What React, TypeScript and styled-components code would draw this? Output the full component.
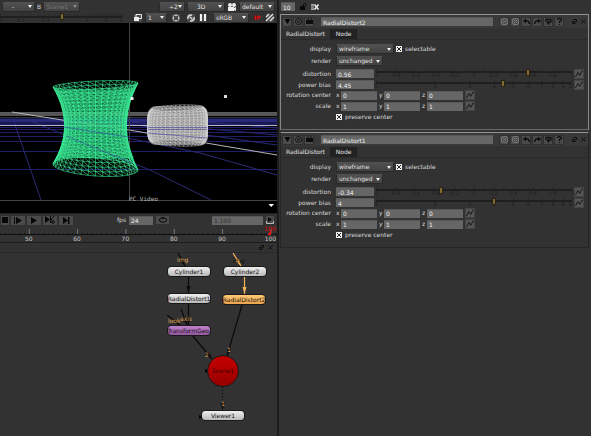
import React from "react";
import styled, { createGlobalStyle } from "styled-components";

const Global = createGlobalStyle`
  * { box-sizing: border-box; }
  body { margin: 0; background: #323232; }
  body, button, input, select {
    font-family: "DejaVu Sans", "Liberation Sans", sans-serif;
    font-size: 6px;
    line-height: 8px;
    color: #dadada;
  }
  button, input, select { margin: 0; padding: 0; border: 0; border-radius: 0; outline: 0; }
`;

/* ---------- layout ---------- */

const Page = styled.div`
  display: grid;
  grid-template-columns: minmax(0, 279fr) minmax(0, 312fr);
  min-height: 100vh;
  background: #323232;
`;

const LeftPane = styled.main`
  display: flex;
  flex-direction: column;
  min-width: 0;
  border-right: 2px solid #1c1c1c;
`;

const RightPane = styled.aside`
  display: flex;
  flex-direction: column;
  min-width: 0;
  padding: 2px 2px 0 1px;
`;

/* ---------- shared controls ---------- */

const Spacer = styled.div`
  flex: 1;
`;

const SelectBox = styled.span<{ $w: number; $dim?: boolean; $center?: boolean }>`
  display: grid;
  grid-template-columns: 1fr 8px;
  align-items: center;
  width: ${(p) => p.$w}px;
  height: 10px;
  flex: none;
  background: linear-gradient(#505050, #424242);
  border: 1px solid #2a2a2a;
  border-top-color: #505050;

  select {
    grid-area: 1 / 1 / 2 / 3;
    width: 100%;
    height: 8px;
    padding-left: ${(p) => (p.$center ? 9 : 2)}px;
    appearance: none;
    background: transparent;
    color: ${(p) => (p.$dim ? "#777" : "#e2e2e2")};
  }
  svg {
    grid-area: 1 / 2;
    width: 4px;
    height: 3px;
    justify-self: center;
    pointer-events: none;
    fill: ${(p) => (p.$dim ? "#888" : "#eee")};
  }
`;

type PickProps = { label: string; value: string; w: number; dim?: boolean; center?: boolean; id?: string };

function Pick({ label, value, w, dim, center, id }: PickProps) {
  return (
    <SelectBox $w={w} $dim={dim} $center={center}>
      <select id={id} aria-label={id ? undefined : label} defaultValue={value}>
        <option value={value}>{value}</option>
      </select>
      <svg viewBox="0 0 4 3"><path d="M0 0H4L2 3Z" /></svg>
    </SelectBox>
  );
}

const IconButton = styled.button<{ $w?: number; $flat?: boolean }>`
  display: flex;
  align-items: center;
  justify-content: center;
  flex: none;
  width: ${(p) => p.$w ?? 10}px;
  height: 10px;
  background: ${(p) => (p.$flat ? "transparent" : "#4a4a4a")};
  border: 1px solid ${(p) => (p.$flat ? "transparent" : "#303030")};
  color: #dedede;

  svg { display: block; flex: none; overflow: visible; }
`;

const CurveFrame = styled(IconButton)`
  background: #555;
  border-color: #444;
`;

const Field = styled.input<{ $w: number; $dim?: boolean }>`
  width: ${(p) => p.$w}px;
  height: 9px;
  flex: none;
  padding-left: 2px;
  background: #666;
  border-top: 1px solid #585858;
  color: ${(p) => (p.$dim ? "#303030" : "#f2f2f2")};
`;

const Check = styled.input`
  appearance: none;
  width: 6px;
  height: 6px;
  flex: none;
  background:
    linear-gradient(45deg, transparent 42%, #222 42% 58%, transparent 58%),
    linear-gradient(-45deg, #eee 42%, #222 42% 58%, #eee 58%);
  border: 1px solid #eee;
`;

/* ---------- slider with scale ---------- */

const SliderBox = styled.div`
  display: grid;
  flex: 1;
  min-width: 0;
  height: 11px;

  svg {
    grid-area: 1 / 1;
    width: 100%;
    height: 11px;
    overflow: visible;
  }
  input {
    grid-area: 1 / 1;
    width: 100%;
    height: 8px;
    appearance: none;
    background: transparent;
  }
  input::-webkit-slider-thumb {
    appearance: none;
    width: 2px;
    height: 5px;
    background: #80692f;
    outline: 1px solid #2a2415;
  }
`;

type Mark = { at: number; text: string };

function Slider({ label, pos, marks, ticks }: { label: string; pos: number; marks: Mark[]; ticks: number[] }) {
  return (
    <SliderBox>
      <svg fontSize="5" fill="#1c1c1c" textAnchor="middle">
        <rect x="0" y="3" width="100%" height="2" fill="#1f1f1f" />
        {ticks.map((t) => (
          <rect key={t} x={`${t}%`} y="1" width="1" height="2" fill="#282828" />
        ))}
        {marks.map((m) => (
          <text key={m.text} x={`${m.at}%`} y="9">{m.text}</text>
        ))}
      </svg>
      <input type="range" aria-label={label} min="0" max="100" step="any" defaultValue={pos} />
    </SliderBox>
  );
}

const linearMarks: Mark[] = [-1, -0.8, -0.6, -0.4, -0.2, 0, 0.2, 0.4, 0.6, 0.8, 1].map((v) => ({
  at: (v + 1) * 50,
  text: String(v),
}));
const linearTicks = Array.from({ length: 21 }, (_, i) => i * 5);
const logMarks: Mark[] = Array.from({ length: 10 }, (_, i) => ({ at: Math.log10(i + 1) * 100, text: String(i + 1) }));
const logTicks = logMarks.map((m) => m.at);
const gainMarks: Mark[] = [
  { at: 1, text: "0" }, { at: 17, text: "0.1" }, { at: 37, text: "0.3" }, { at: 50, text: "1" },
  { at: 71, text: "2" }, { at: 86, text: "3" }, { at: 98, text: "4" },
];
const gainTicks = Array.from({ length: 32 }, (_, i) => Math.round(100 * Math.sqrt(i / 31)));

/* ---------- viewer toolbars ---------- */

const Toolbar = styled.div`
  display: flex;
  align-items: center;
  height: 12px;
  padding: 1px 2px 0;
  gap: 2px;
`;

const GainRow = styled(Toolbar)`
  height: 11px;
  padding: 0 2px 0 0;
`;

const GainSlot = styled.div`
  display: flex;
  flex: 1;
  height: 10px;
  margin-right: 8px;
`;

const Gap = styled.span<{ $w: number }>`
  width: ${(p) => p.$w}px;
  flex: none;
`;

const Live = styled.button`
  flex: none;
  width: 12px;
  background: transparent;
  color: #f00000;
  font-weight: bold;
`;

function ViewerBars() {
  return (
    <>
      <Toolbar>
        <Pick label="Input A" value="-" w={33} center />
        <label htmlFor="input-b">B</label>
        <Pick label="Input B" id="input-b" value="Scene1" w={37} dim />
        <Spacer />
        <Pick label="Downscale" value="÷2" w={26} center />
        <Pick label="View" value="3D" w={38} center />
        <IconButton aria-label="Camera" $flat>
          <svg width="8" height="8" viewBox="0 0 8 8" fill="#eee">
            <circle cx="2" cy="2" r="2" /><circle cx="6" cy="2" r="2" /><rect y="4" width="6" height="4" /><path d="M6 5L8 4V8L6 7Z" />
          </svg>
        </IconButton>
        <Pick label="Camera" value="default" w={36} />
      </Toolbar>
      <GainRow>
        <GainSlot>
          <Slider label="Gain" pos={50} marks={gainMarks} ticks={gainTicks} />
        </GainSlot>
        <IconButton aria-label="Overlay">
          <svg width="8" height="7" viewBox="0 0 8 7">
            <path d="M2 .5H7.5V4.5H2Z" fill="none" stroke="#eee" /><rect y="3" width="5" height="4" fill="#eee" />
          </svg>
        </IconButton>
        <Pick label="Proxy" value="1" w={22} />
        <Gap $w={0} />
        <IconButton aria-label="Region">
          <svg width="8" height="8" viewBox="0 0 8 8" fill="none" stroke="#bbb">
            <rect x="1.5" y="1.5" width="5" height="5" rx="1" /><path d="M4 0V2M4 6V8M0 4H2M6 4H8" />
          </svg>
        </IconButton>
        <Gap $w={1} />
        <IconButton aria-label="Refresh">
          <svg width="8" height="8" viewBox="0 0 8 8" fill="none" stroke="#ddd" strokeWidth="1.5">
            <path d="M1 5A3 3 0 0 1 5 1.2M7 3A3 3 0 0 1 3 6.8" /><path d="M2.5 2.5L5.5 5.5" strokeWidth="1.2" />
          </svg>
        </IconButton>
        <IconButton aria-label="Pause">
          <svg width="6" height="7" viewBox="0 0 6 7" fill="#f2f2f2"><rect width="2" height="7" /><rect x="4" width="2" height="7" /></svg>
        </IconButton>
        <Gap $w={1} />
        <Pick label="Colour space" value="sRGB" w={36} />
        <Live>IP</Live>
        <IconButton aria-label="Stripes">
          <svg width="8" height="7" viewBox="0 0 8 7" stroke="#e4e4e4" strokeWidth="1.3">
            <path d="M0 3L3 0M0 7L7 0M4 7L8 3" />
          </svg>
        </IconButton>
      </GainRow>
    </>
  );
}

/* ---------- 3D viewport ---------- */

const Viewport = styled.section`
  background: #000;
  border-bottom: 1px solid #222;
  svg { display: block; width: 100%; height: auto; }
`;

type P = [number, number];

function mesh(at: (t: number, a: number) => P, rows: number, cols: number) {
  const parts: string[] = [];
  const fmt = ([x, y]: P) => `${x.toFixed(1)} ${y.toFixed(1)}`;
  for (let r = 0; r <= rows; r++) {
    const t = -1 + (2 * r) / rows;
    for (let c = 0; c < cols; c++) {
      const a = (c / cols) * Math.PI * 2;
      const b = ((c + 1) / cols) * Math.PI * 2;
      parts.push(`M${fmt(at(t, a))}L${fmt(at(t, b))}`);
      if (r < rows) {
        const u = -1 + (2 * (r + 1)) / rows;
        parts.push(`M${fmt(at(t, a))}L${fmt(at(u, a))}L${fmt(at(t, b))}`);
      }
    }
  }
  return parts.join("");
}

const hourglass = mesh(
  (t, a) => {
    const rx = 31 + 11.5 * t * t;
    const ry = t < 0 ? t * 4 : t * 9;
    const tilt = t < 0 ? 2 * t : 3 * t;
    return [95.5 + rx * Math.cos(a), 126 + t * 41 + ry * Math.sin(a) + tilt * Math.cos(a)];
  },
  22,
  36,
);

const barrel = mesh(
  (t, a) => {
    const rx = 30 - 4 * Math.pow(Math.abs(t), 5);
    return [177.5 + rx * Math.cos(a), 125.5 + t * 17.5 + t * 3 * Math.sin(a) + t * Math.cos(a)];
  },
  13,
  38,
);

function Scene3D() {
  return (
    <Viewport>
      <svg viewBox="0 23 277 190">
        <g fill="none">
          <path d="M0 112.5H277" stroke="#5b5b5b" />
          <path d="M0 114.5H277" stroke="#555" strokeWidth="3" />
          <path d="M0 117.5H277" stroke="#303030" />
          <path d="M0 120.5H277" stroke="#29297c" strokeWidth="4" />
          <path d="M0 124H277" stroke="#1b1b5a" strokeWidth="3" />
          <path d="M0 127.5H277M0 129.5H277M0 132.5H277M0 136.5H277M0 141.5H277M0 151.5H277M0 169.5H277" stroke="#1e1e66" />
          <path d="M14 122L41 200M33 122L150 170L211 200M70 126L200 153L277 175M100 120L277 145M130 122L277 135M180 120L277 128" stroke="#2a2a78" />
          <path d="M0 125.5H277" stroke="#b8b8c8" />
          <path d="M12 112L62 120L129 130L277 155" stroke="#b5b5b5" />
          <path d="M129.5 23V200" stroke="#444" />
          <path d="M0 200.5H277" stroke="#464646" />
        </g>
        <path d="M56 90Q64 104 65 126Q64 144 56 158H134Q127 144 126 126Q127 104 135 90Z" fill="#1f9f60" opacity=".65" />
        <path d={hourglass} fill="none" stroke="#3bea96" strokeWidth=".6" />
        <rect x="148" y="106" width="60" height="39" rx="8" fill="#6e6e6e" />
        <path d={barrel} fill="none" stroke="#d8d8d8" strokeWidth=".45" />
        <g fill="none" stroke="#34349a" opacity=".55">
          <path d="M64 127L128 137M66 136L132 163M148 127.5H207M148 129.5H207M148 133L207 138" />
        </g>
        <rect x="130.5" y="97" width="3" height="3" fill="#eee" />
        <rect x="224" y="95" width="3" height="3" fill="#ddd" />
        <text x="129" y="201" fontSize="6" fontFamily="DejaVu Sans Mono, monospace" fill="#b5b5b5">PC Video</text>
        <path d="M268.5 204H274L271.2 207Z" fill="#fff" />
      </svg>
    </Viewport>
  );
}

/* ---------- transport and ruler ---------- */

const Transport = styled.div`
  display: flex;
  align-items: center;
  height: 12px;
  padding: 0 2px 0 0;
`;

const PlayGroup = styled.div`
  display: flex;
  button { height: 11px; }
`;

const FieldLabel = styled.label`
  padding: 0 3px;
`;

const Ruler = styled.svg`
  display: block;
  width: 100%;
  height: 16px;
  overflow: hidden;
`;

const Frames = Array.from({ length: 58 }, (_, i) => 44 + i);
const framePos = (f: number) => (10.4 + (f - 50) * 1.744).toFixed(2);

function Timeline() {
  return (
    <>
      <Transport>
        <PlayGroup>
          <IconButton aria-label="Stop"><svg width="6" height="6"><rect width="6" height="6" fill="#080808" /></svg></IconButton>
          <IconButton aria-label="Step forward" $w={16}>
            <svg width="8" height="7" viewBox="0 0 8 7" fill="#080808"><rect width="1" height="7" /><path d="M2 0L8 3.5L2 7Z" /></svg>
          </IconButton>
          <IconButton aria-label="Play" $w={16}>
            <svg width="6" height="7" viewBox="0 0 6 7" fill="#080808"><path d="M0 0L6 3.5L0 7Z" /></svg>
          </IconButton>
          <IconButton aria-label="Next key" $w={16}>
            <svg width="10" height="8" viewBox="0 0 10 8" fill="#080808">
              <path d="M0 0L5 3.5L0 7Z" /><rect x="5" width="1" height="7" />
              <path d="M9 0L6 4" stroke="#080808" /><circle cx="8" cy="6" r="1.3" fill="none" stroke="#080808" />
            </svg>
          </IconButton>
          <IconButton aria-label="Last frame" $w={16}>
            <svg width="7" height="7" viewBox="0 0 7 7" fill="#080808"><path d="M0 0L5 3.5L0 7Z" /><rect x="5" width="1.5" height="7" /></svg>
          </IconButton>
        </PlayGroup>
        <Gap $w={40} />
        <FieldLabel htmlFor="fps">fps</FieldLabel>
        <Field id="fps" $w={24} defaultValue="24" />
        <Gap $w={2} />
        <IconButton aria-label="Loop" $w={15}>
          <svg width="8" height="6" viewBox="0 0 8 6" fill="none" stroke="#080808"><rect x=".5" y="1" width="7" height="4" rx="2" /><path d="M3 0L5 1L3 2" /></svg>
        </IconButton>
        <Spacer />
        <Field aria-label="Frame range" $w={51} $dim defaultValue="1,100" />
        <Gap $w={2} />
        <IconButton aria-label="Range">
          <svg width="8" height="7" viewBox="0 0 8 7" fill="#080808"><path d="M2 0L6 2.5L2 5Z" /><path d="M.5 4V6.5H7.5V4" fill="none" stroke="#bbb" /></svg>
        </IconButton>
      </Transport>
      <Ruler fontSize="6" fill="#c8c8c8" textAnchor="middle">
        {Frames.map((f) => (
          <rect key={f} x={`${framePos(f)}%`} y={f % 10 ? 7 : 3} width="1" height={f % 10 ? 2 : 5} fill={f % 10 ? "#151515" : "#777"} />
        ))}
        <rect y="8" width="100%" height="1" fill="#111" />
        {[50, 60, 70, 80, 90, 100].map((f) => (
          <text key={f} x={`${framePos(f)}%`} y="15">{f}</text>
        ))}
        <text x="97.5%" y="5" fill="#e80000">100</text>
        <svg x="96.5%" y="4" width="4" height="5"><path d="M4 0V5H0Z" fill="#f01010" /></svg>
      </Ruler>
    </>
  );
}

/* ---------- node graph ---------- */

const GraphBar = styled.div`
  display: flex;
  align-items: center;
  justify-content: flex-end;
  height: 11px;
  padding-right: 2px;
  border-top: 1px solid #1d1d1d;
  border-bottom: 1px solid #282828;
`;

const Graph = styled.section`
  position: relative;
  flex: 1;
  min-height: 184px;
  overflow: hidden;
`;

const Wires = styled.svg`
  position: absolute;
  inset: 0;
  width: 100%;
  height: 100%;
`;

const tones = {
  plain: "linear-gradient(#efefef, #b9b9b9)",
  active: "linear-gradient(#ffc877, #eda54c)",
  geo: "linear-gradient(#c083cc, #9358a0)",
  scene: "linear-gradient(#c60000, #960000)",
};

const Node = styled.div<{ $x: number; $y: number; $tone: keyof typeof tones; $round?: boolean }>`
  position: absolute;
  left: ${(p) => p.$x}px;
  top: ${(p) => p.$y}px;
  display: flex;
  align-items: center;
  justify-content: center;
  width: ${(p) => (p.$round ? 32 : 44)}px;
  height: ${(p) => (p.$round ? 32 : 11)}px;
  border: 1px solid #191919;
  border-radius: ${(p) => (p.$round ? "50%" : "4px")};
  background: ${(p) => tones[p.$tone]};
  color: ${(p) => (p.$round ? "#400000" : "#101010")};
  white-space: nowrap;
`;

const Tag = styled.span<{ $x: number; $y: number; $dark?: boolean }>`
  position: absolute;
  left: ${(p) => p.$x}px;
  top: ${(p) => p.$y}px;
  color: ${(p) => (p.$dark ? "#130f08" : "#e0a95c")};
`;

function Arrow({ from, to, color = "#0a0a0a", dashed }: { from: P; to: P; color?: string; dashed?: boolean }) {
  const angle = (Math.atan2(to[1] - from[1], to[0] - from[0]) * 180) / Math.PI;
  return (
    <g stroke={color} fill={color}>
      <path d={`M${from[0]} ${from[1]}L${to[0]} ${to[1]}`} strokeDasharray={dashed ? "1 2" : undefined} strokeWidth="1.2" />
      <path d="M0 0L-7 -2V2Z" stroke="none" transform={`translate(${to[0]} ${to[1]}) rotate(${angle})`} />
    </g>
  );
}

const RestoreIcon = () => (
  <svg width="5" height="5" viewBox="0 0 5 5" fill="none" stroke="#0c0c0c"><path d="M1.5 .5H4.5V3M.5 2.5H3V4.5H.5Z" /></svg>
);
const CloseIcon = () => (
  <svg width="5" height="5" viewBox="0 0 5 5" stroke="#0c0c0c"><path d="M.5 .5L4.5 4.5M4.5 .5L.5 4.5" /></svg>
);

function NodeGraph() {
  return (
    <>
      <GraphBar>
        <IconButton $w={9} $flat aria-label="Float graph"><RestoreIcon /></IconButton>
        <IconButton $w={9} $flat aria-label="Close graph"><CloseIcon /></IconButton>
      </GraphBar>
      <Graph>
        <Wires>
          <Arrow from={[178, 0]} to={[185, 13]} />
          <Arrow from={[233, 0]} to={[241, 13]} color="#f5b35c" />
          <Arrow from={[188.5, 23]} to={[188.5, 40]} />
          <Arrow from={[244.5, 23]} to={[244.5, 41]} color="#f5b35c" />
          <Arrow from={[188.5, 50]} to={[188.5, 72]} />
          <Arrow from={[181, 56]} to={[187, 72]} />
          <Arrow from={[167, 62]} to={[180, 72]} />
          <Arrow from={[192, 82]} to={[212, 106]} />
          <Arrow from={[242, 52]} to={[227, 103]} />
          <Arrow from={[222.5, 134]} to={[222.5, 157]} dashed />
          <path d="M205 116V120L209 118ZM199 162V166L203 164Z" fill="#080808" />
        </Wires>
        <Node $x={167} $y={13} $tone="plain">Cylinder1</Node>
        <Node $x={223} $y={13} $tone="plain">Cylinder2</Node>
        <Node $x={167} $y={40} $tone="plain">RadialDistort1</Node>
        <Node $x={222} $y={41} $tone="active">RadialDistort2</Node>
        <Node $x={167} $y={72} $tone="geo">TransformGeo.</Node>
        <Node $x={207} $y={102} $tone="scene" $round>Scene1</Node>
        <Node $x={201} $y={157} $tone="plain">Viewer1</Node>
        <Tag $x={177} $y={3}>img</Tag>
        <Tag $x={233} $y={4} $dark>img</Tag>
        <Tag $x={168} $y={64}>look</Tag>
        <Tag $x={180} $y={62}>axis</Tag>
        <Tag $x={205} $y={98}>2</Tag>
        <Tag $x={227} $y={93}>1</Tag>
        <Tag $x={221} $y={147}>1</Tag>
      </Graph>
    </>
  );
}

/* ---------- properties ---------- */

const BinBar = styled.div`
  display: flex;
  align-items: center;
  gap: 4px;
  height: 9px;
  margin: 0 0 3px 1px;
`;

const Panel = styled.section<{ $selected?: boolean }>`
  margin-bottom: 2px;
  border: 1px solid ${(p) => (p.$selected ? "#8a8a8a" : "#262626")};
  border-top-color: #929292;
  border-bottom-color: ${(p) => (p.$selected ? "#686868" : "#262626")};
`;

const PanelHead = styled.header`
  display: flex;
  align-items: center;
  gap: 1px;
  height: 13px;
  padding: 0 1px;
  background: #393939;
`;

const NameField = styled(Field)`
  flex: 1;
  min-width: 0;
  margin: 0 5px 0 6px;
`;

const Tabs = styled.div`
  display: flex;
  align-items: flex-end;
  height: 11px;
`;

const Tab = styled.button<{ $on?: boolean }>`
  height: 10px;
  padding: 0 5px;
  background: ${(p) => (p.$on ? "#323232" : "#222")};
  border-right: 1px solid #1d1d1d;
  color: #e4e4e4;
`;

const PanelBody = styled.div`
  padding: 4px 4px 6px 0;
  border-top: 1px solid #2a2a2a;
`;

const Rows = styled.div<{ $gap: number }>`
  display: grid;
  row-gap: ${(p) => p.$gap}px;
  margin-bottom: 1px;
`;

const Row = styled.div`
  display: grid;
  grid-template-columns: 50px minmax(0, 1fr);
  column-gap: 5px;
  align-items: center;
  height: 10px;
`;

const RowLabel = styled.label`
  text-align: right;
  white-space: nowrap;
`;

const Controls = styled.div`
  display: flex;
  align-items: center;
  gap: 2px;
`;

const CheckLabel = styled.label`
  display: flex;
  align-items: center;
  gap: 3px;
`;

const Axis = styled.label`
  display: flex;
  align-items: center;
  gap: 1px;
  span { width: 4px; }
`;

function CurveButton({ label }: { label: string }) {
  return (
    <CurveFrame aria-label={`${label} animation`}>
      <svg width="8" height="8" viewBox="0 0 8 8" fill="none" stroke="#161616"><path d="M0 6.5Q1.5 7 2.5 3Q3.3 1.5 4 4Q4.8 7 5.8 3.5Q6.5 .5 8 1" /></svg>
    </CurveFrame>
  );
}

function VectorRow({ label, value }: { label: string; value: string }) {
  return (
    <Row role="group" aria-label={label}>
      <RowLabel as="span">{label}</RowLabel>
      <Controls>
        {["x", "y", "z"].map((axis) => (
          <Axis key={axis}><span>{axis}</span><Field $w={36} defaultValue={value} /></Axis>
        ))}
        <CurveButton label={label} />
      </Controls>
    </Row>
  );
}

const HeadIcon = styled.svg`
  width: 7px;
  height: 7px;
  fill: none;
  stroke: #0e0e0e;
`;

const headActions: { name: string; art: React.ReactNode }[] = [
  { name: "Snapshot", art: <g stroke="#7c7c7c"><rect x=".5" y=".5" width="6" height="6" rx="2" /><path d="M2 2L5 5M5 2L2 5" /></g> },
  { name: "Restore", art: <g stroke="#7c7c7c"><rect x=".5" y=".5" width="6" height="6" rx="2" /><path d="M2 2L5 5M5 2L2 5" /></g> },
  { name: "Undo", art: <g><path d="M0 3L3 .5V5.5Z" fill="#0e0e0e" stroke="none" /><path d="M2 3Q6 2 6.3 6" strokeWidth="1.5" /></g> },
  { name: "Redo", art: <g><path d="M7 3L4 .5V5.5Z" fill="#0e0e0e" stroke="none" /><path d="M5 3Q1 2 .7 6" strokeWidth="1.5" /></g> },
  { name: "Revert", art: <path d="M1 4V1.500H6V3.500Q6 4.500 3 4.500M4 3L2.500 4.500L4 6.500" strokeWidth="1.3" /> },
];

type DistortProps = { name: string; distortion: string; bias: string; selected?: boolean };

function DistortPanel({ name, distortion, bias, selected }: DistortProps) {
  return (
    <Panel $selected={selected}>
      <PanelHead>
        <IconButton aria-label="Collapse"><HeadIcon viewBox="0 0 7 7"><path d="M.5 1H6.500L3.500 6Z" fill="#050505" stroke="none" /></HeadIcon></IconButton>
        <IconButton aria-label="Center"><HeadIcon viewBox="0 0 7 7"><circle cx="3.5" cy="3.5" r="3" /><circle cx="3.5" cy="3.5" r="1" /></HeadIcon></IconButton>
        <IconButton aria-label="Input"><HeadIcon viewBox="0 0 7 7"><path d="M0 2H7V6H0Z" fill="#0e0e0e" stroke="none" /><path d="M2 0V2M5 0V2" /></HeadIcon></IconButton>
        <NameField $w={100} aria-label="Node name" defaultValue={name} />
        {headActions.map((a) => (
          <IconButton key={a.name} aria-label={a.name}><HeadIcon viewBox="0 0 7 7">{a.art}</HeadIcon></IconButton>
        ))}
        <IconButton aria-label="Help"><HeadIcon viewBox="0 0 7 7"><path d="M1.500 2Q1.500 .7 3.500 .7T5.500 2Q5.500 3 3.500 3.600V5M3.500 6V7" strokeWidth="1.3" /></HeadIcon></IconButton>
        <Gap $w={4} />
        <IconButton $w={8} $flat aria-label="Float"><RestoreIcon /></IconButton>
        <IconButton $w={8} $flat aria-label="Close"><CloseIcon /></IconButton>
      </PanelHead>
      <Tabs role="tablist">
        <Tab role="tab" aria-selected $on>RadialDistort</Tab>
        <Tab role="tab" aria-selected={false}>Node</Tab>
      </Tabs>
      <PanelBody>
        <Rows $gap={2}>
          <Row>
            <RowLabel htmlFor={`${name}-display`}>display</RowLabel>
            <Controls>
              <Pick label="display" id={`${name}-display`} value="wireframe" w={58} />
              <CheckLabel><Check type="checkbox" defaultChecked />selectable</CheckLabel>
            </Controls>
          </Row>
          <Row>
            <RowLabel htmlFor={`${name}-render`}>render</RowLabel>
            <Controls><Pick label="render" id={`${name}-render`} value="unchanged" w={47} /></Controls>
          </Row>
          <Row>
            <RowLabel htmlFor={`${name}-distortion`}>distortion</RowLabel>
            <Controls>
              <Field $w={38} id={`${name}-distortion`} defaultValue={distortion} />
              <Slider label="distortion" pos={(Number(distortion) + 1) * 50} marks={linearMarks} ticks={linearTicks} />
              <CurveButton label="distortion" />
            </Controls>
          </Row>
        </Rows>
        <Rows $gap={1}>
          <Row>
            <RowLabel htmlFor={`${name}-bias`}>power bias</RowLabel>
            <Controls>
              <Field $w={38} id={`${name}-bias`} defaultValue={bias} />
              <Slider label="power bias" pos={Math.log10(Number(bias)) * 100} marks={logMarks} ticks={logTicks} />
              <CurveButton label="power bias" />
            </Controls>
          </Row>
          <VectorRow label="rotation center" value="0" />
          <VectorRow label="scale" value="1" />
          <Row>
            <span />
            <CheckLabel><Check type="checkbox" defaultChecked />preserve center</CheckLabel>
          </Row>
        </Rows>
      </PanelBody>
    </Panel>
  );
}

export default function App() {
  return (
    <>
      <Global />
      <Page>
        <LeftPane>
          <ViewerBars />
          <Scene3D />
          <Timeline />
          <NodeGraph />
        </LeftPane>
        <RightPane>
          <BinBar>
            <Field aria-label="Maximum panels" $w={14} defaultValue="10" />
            <IconButton aria-label="Lock panels" $w={8} $flat>
              <svg width="7" height="7" viewBox="0 0 7 7" fill="#080808"><rect y="3" width="5" height="4" /><path d="M3.500 3V1.500Q3.500 .5 4.800 .5T6 1.500V3" fill="none" stroke="#080808" /></svg>
            </IconButton>
            <IconButton aria-label="Clear panels" $w={8} $flat>
              <svg width="8" height="6" viewBox="0 0 8 6"><rect width="3" height="6" fill="#aaa" /><path d="M0 2H3M0 4H3" stroke="#333" strokeWidth=".7" /><path d="M3.500 .5L7.500 5.500M7.500 .5L3.500 5.500" stroke="#eee" strokeWidth="1.5" /></svg>
            </IconButton>
          </BinBar>
          <DistortPanel name="RadialDistort2" distortion="0.56" bias="4.45" selected />
          <DistortPanel name="RadialDistort1" distortion="-0.34" bias="4" />
        </RightPane>
      </Page>
    </>
  );
}
